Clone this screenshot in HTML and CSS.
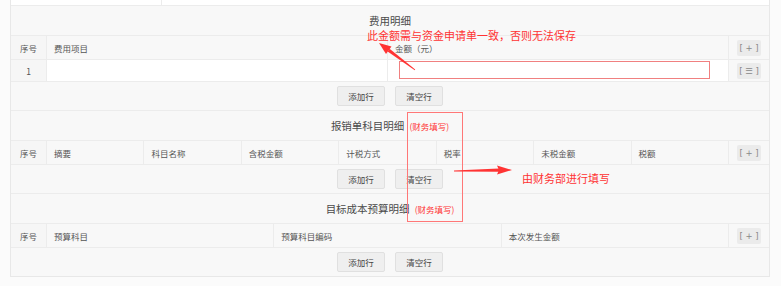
FILE: index.html
```html
<!DOCTYPE html>
<html lang="zh-CN">
<head>
  <meta charset="UTF-8">
  <title>费用明细</title>
  <link rel="stylesheet" href="styles.css">
</head>
<body>
<div class="page">

  <div class="panel">
    <div class="prev-row"><div class="pc1"></div><div class="pc2"></div></div>

    <section class="block">
      <div class="block-title">费用明细</div>
      <div class="row head cols-2">
        <div class="cell idx">序号</div>
        <div class="cell">费用项目</div>
        <div class="cell">金额（元）</div>
        <div class="cell ops"><span class="mini">[ + ]</span></div>
      </div>
      <div class="row data cols-2">
        <div class="cell idx">1</div>
        <div class="cell white"></div>
        <div class="cell white"><div class="amount-input"></div></div>
        <div class="cell ops"><span class="mini">[ ☰ ]</span></div>
      </div>
      <div class="btn-row">
        <button class="btn">添加行</button>
        <button class="btn">清空行</button>
      </div>
    </section>

    <section class="block">
      <div class="block-title">报销单科目明细<span class="note">(财务填写)</span></div>
      <div class="row head cols-7">
        <div class="cell idx">序号</div>
        <div class="cell">摘要</div>
        <div class="cell">科目名称</div>
        <div class="cell">含税金额</div>
        <div class="cell">计税方式</div>
        <div class="cell">税率</div>
        <div class="cell">未税金额</div>
        <div class="cell">税额</div>
        <div class="cell ops"><span class="mini">[ + ]</span></div>
      </div>
      <div class="btn-row">
        <button class="btn">添加行</button>
        <button class="btn">清空行</button>
      </div>
    </section>

    <section class="block last">
      <div class="block-title">目标成本预算明细<span class="note">(财务填写)</span></div>
      <div class="row head cols-3">
        <div class="cell idx">序号</div>
        <div class="cell">预算科目</div>
        <div class="cell">预算科目编码</div>
        <div class="cell">本次发生金额</div>
        <div class="cell ops"><span class="mini">[ + ]</span></div>
      </div>
      <div class="btn-row">
        <button class="btn">添加行</button>
        <button class="btn">清空行</button>
      </div>
    </section>
  </div>

  <!-- annotations drawn over the form -->
  <div class="tip tip-amount">此金额需与资金申请单一致，否则无法保存</div>
  <div class="tip tip-finance">由财务部进行填写</div>
  <div class="mark-box"></div>
  <svg class="arrows" width="781" height="286" viewBox="0 0 781 286">
    <polygon fill="#f33" points="379,43 386,54 391.5,46.5"/>
    <polygon fill="#f33" points="387.6,51.4 389.6,48.8 415.2,69.6 414.8,70.3"/>
    <polygon fill="#f33" points="454,170.6 454,171.4 499,171.8 499,168.4"/>
    <polygon fill="#f33" points="512,170 497,165.5 499,170 497,174.5"/>
  </svg>
</div>
</body>
</html>
```

FILE: styles.css
```css
body {
  margin: 0;
  background: #fbfbfb;
  font-family: "Noto Sans CJK SC", "Noto Sans", sans-serif;
  color: #555;
}

.page {
  position: relative;
  width: 781px;
  height: 286px;
}

.panel {
  margin-left: 10px;
  width: 760px;
  box-sizing: border-box;
  border: 1px solid #e8e8e8;
  border-top: none;
  background: #f8f8f8;
}

.prev-row {
  height: 6px;
  display: grid;
  grid-template-columns: 151px 1fr;
  border-bottom: 1px solid #ececec;
  box-sizing: border-box;
}

.pc1 {
  background: #fff;
  border-right: 1px solid #ececec;
}

.pc2 {
  background: #fff;
}

.block {
  border-bottom: 1px solid #ececec;
}

.block.last {
  border-bottom: none;
}

.block-title {
  height: 29px;
  display: flex;
  align-items: center;
  justify-content: center;
  font-size: 10.5px;
  font-weight: 400;
  color: #4a4a4a;
  border-bottom: 1px solid #ececec;
}

.note {
  margin-left: 5px;
  font-size: 8.5px;
  font-weight: 400;
  color: #f33;
}

.row {
  display: grid;
  box-sizing: border-box;
  border-bottom: 1px solid #ececec;
}

.row.head {
  height: 24px;
}

.row.data {
  height: 22px;
}

.cols-2 { grid-template-columns: 35px 1fr 1fr 41px; }
.cols-3 { grid-template-columns: 35px 1fr 1fr 1fr 41px; }
.cols-7 { grid-template-columns: 35px repeat(7, 1fr) 41px; }

.cell {
  display: flex;
  align-items: center;
  padding-left: 7px;
  font-size: 8.5px;
  color: #555;
  border-left: 1px solid #ececec;
  min-width: 0;
}

.cell.idx {
  border-left: none;
  padding-left: 0;
  justify-content: center;
  background: #f6f6f6;
}

.cell.white {
  background: #fff;
}

.cell.ops {
  padding-left: 0;
  justify-content: center;
}

.mini {
  display: inline-flex;
  align-items: center;
  justify-content: center;
  width: 24px;
  height: 16px;
  background: #ebebeb;
  border-radius: 2px;
  font-family: "DejaVu Sans", sans-serif;
  font-size: 8.5px;
  color: #888;
  white-space: pre;
}

.data .cell {
  align-items: flex-start;
}

.data .cell.idx,
.data .cell.ops {
  align-items: center;
}

.amount-input {
  margin: 1px 0 0 4px;
  width: 311px;
  height: 18px;
  box-sizing: border-box;
  border: 1px solid #f08080;
  background: #fff;
}

.btn-row {
  height: 28px;
  display: flex;
  align-items: center;
  justify-content: center;
  gap: 10px;
}

.btn {
  width: 48px;
  height: 20px;
  padding: 0;
  border: 1px solid #e0e0e0;
  border-radius: 2px;
  background: #efefef;
  font-family: inherit;
  font-size: 8.5px;
  color: #444;
}

.tip {
  position: absolute;
  color: #f33;
  font-size: 11px;
  line-height: 13px;
  white-space: nowrap;
}

.tip-amount {
  left: 367px;
  top: 29px;
}

.tip-finance {
  left: 522px;
  top: 172px;
}

.mark-box {
  position: absolute;
  left: 407px;
  top: 112px;
  width: 56px;
  height: 110px;
  box-sizing: border-box;
  border: 1px solid #f77;
}

.arrows {
  position: absolute;
  left: 0;
  top: 0;
  pointer-events: none;
}
```
